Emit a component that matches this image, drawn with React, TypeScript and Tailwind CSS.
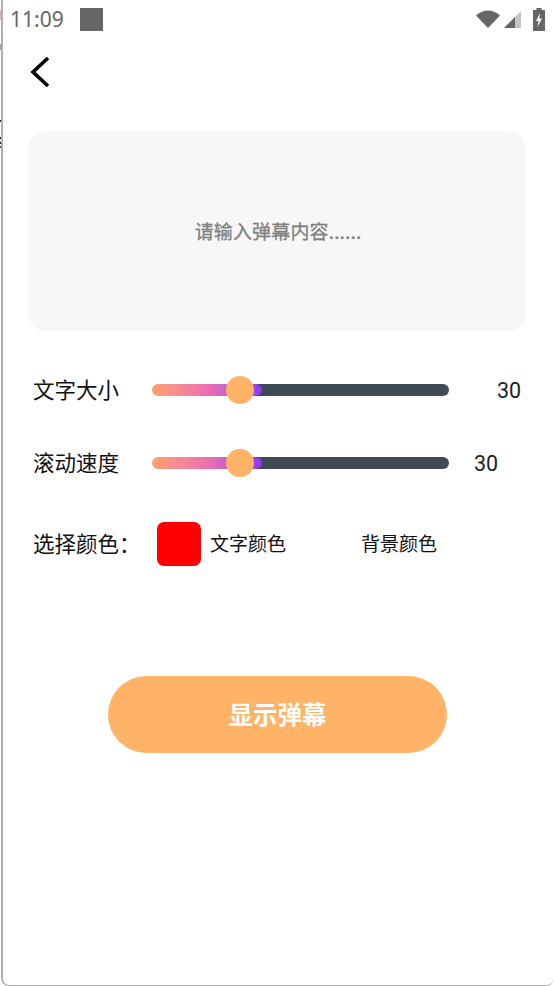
import type { FC } from "react";

const Slider: FC = () => (
  <div className="relative h-3 w-[297px] shrink-0">
    <div className="absolute inset-y-0 left-[60px] right-0 rounded-full bg-[#3f4a56]" />
    <div className="relative h-3 w-[110px] rounded-full bg-gradient-to-r from-[#ffa16c] via-[#ee6fb0] to-[#8a37f0]" />
    <div className="absolute left-[74px] top-[-8px] h-[28px] w-[28px] rounded-full bg-[#ffb366]" />
  </div>
);

const StatusBar: FC = () => (
  <div className="flex h-[38px] items-center pl-[7px] pr-[9px] text-[#666666]">
    <span className="pt-[1px] font-['Noto_Sans'] text-[21px] leading-none">11:09</span>
    <div className="ml-[16px] h-[23px] w-[23px] bg-[#666666]" />
    <div className="ml-auto flex items-center">
      <svg width="24" height="18" viewBox="0 0 24 18" fill="#666666">
        <path d="M0 5.500C3 2.500 7.500.5 12 .5s9 2 12 5L12 18z" />
      </svg>
      <svg className="ml-[4px]" width="17" height="17" viewBox="0 0 17 17">
        <path d="M0 17 17 0v17z" fill="#c4c4c4" />
        <path d="M0 17 11 6v11z" fill="#666666" />
      </svg>
      <svg className="ml-[12px]" width="12" height="23" viewBox="0 0 12 23" fill="#666666">
        <path d="M3.500 0h5v2H12v21H0V2h3.500z" />
        <path d="M7 5 3 13h2.500L4.500 19 9 10.500H6.300z" fill="#ffffff" />
      </svg>
    </div>
  </div>
);

export default function App() {
  return (
    <div className="relative h-[986px] w-[554px] overflow-hidden bg-white pl-[1px] font-['Roboto','Noto_Sans_CJK_SC',sans-serif]">
      {/* specks left over at the window edge */}
      <div className="absolute left-0 top-[120px] h-[2px] w-[1px] bg-[#222222]" />
      <div className="absolute left-0 top-[137px] h-[2px] w-[1px] bg-[#222222]" />
      <div className="absolute left-0 top-[142px] h-[2px] w-[1px] bg-[#222222]" />
      <div className="absolute left-0 top-[146px] h-[2px] w-[1px] bg-[#444444]" />
      <div className="absolute left-0 top-[10px] h-[10px] w-[1px] bg-[#d8b4bc]" />
      <div className="absolute left-0 top-[44px] h-[6px] w-[1px] bg-[#999999]" />

      <div className="h-[986px] rounded-b-[8px] border-b border-l-2 border-[#b0b0b0] bg-white">
        <StatusBar />
        <div className="pl-[27px] pt-[18px]">
          <svg width="20" height="32" viewBox="0 0 20 32" fill="none" stroke="#000000" strokeWidth="3.6">
            <path d="M18 2 3 16l15 14" />
          </svg>
        </div>
        <div className="ml-[25px] mt-[43px] flex h-[200px] w-[498px] items-center justify-center rounded-[18px] bg-[#f7f7f7]">
          <span className="pl-[2px] font-['Noto_Sans_CJK_SC'] text-[19px] tracking-[0.15px] text-[#808080] [-webkit-text-stroke:0.3px_#808080]">
            请输入弹幕内容......
          </span>
        </div>
        <div className="ml-[30px] mt-[43px] flex h-[32px] items-center">
          <span className="w-[119px] pt-[2px] text-[21.500px] text-[#111111]">文字大小</span>
          <Slider />
          <span className="ml-[48px] pt-[3px] text-[21.500px] text-[#222222]">30</span>
        </div>
        <div className="ml-[30px] mt-[41px] flex h-[32px] items-center">
          <span className="w-[119px] pt-[2px] text-[21.500px] text-[#111111]">滚动速度</span>
          <Slider />
          <span className="ml-[25px] pt-[3px] text-[21.500px] text-[#222222]">30</span>
        </div>
        <div className="ml-[30px] mt-[43px] flex h-[44px] items-center">
          <span className="w-[124px] pt-[3px] text-[21.500px] text-[#111111]">选择颜色：</span>
          <div className="h-[44px] w-[44px] rounded-[7px] bg-[#ff0000]" />
          <span className="ml-[9px] pt-[3px] text-[19px] text-[#111111]">文字颜色</span>
          <span className="ml-[75px] pt-[3px] text-[19px] text-[#111111]">背景颜色</span>
        </div>
        <div className="ml-[105px] mt-[110px] flex h-[77px] w-[339px] items-center justify-center rounded-full bg-[#ffb366]">
          <span className="pt-[4px] text-[24.500px] font-bold text-white">显示弹幕</span>
        </div>
      </div>
    </div>
  );
}
